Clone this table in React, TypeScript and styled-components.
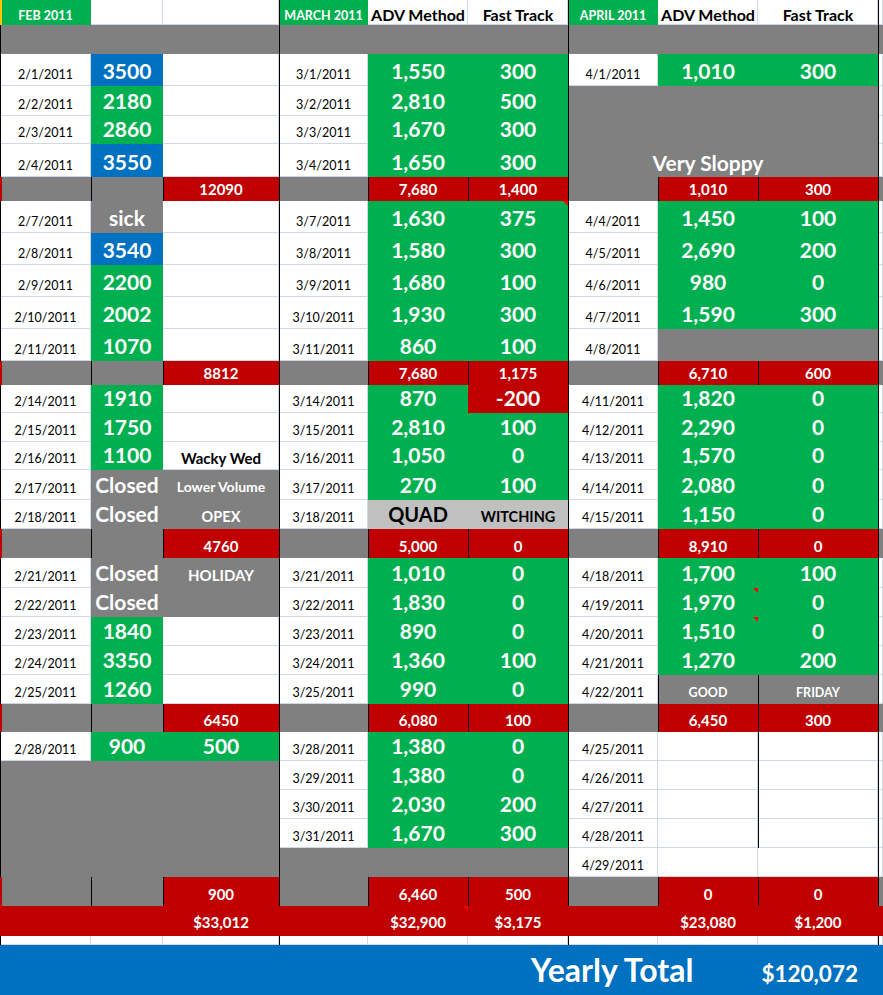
import React from 'react';
import styled, { createGlobalStyle, css } from 'styled-components';

type Fill = 'w' | 'g' | 'b' | 'r' | 'y' | 'l';
type Kind = 'blank' | 'date' | 'fig' | 'sum' | 'month' | 'label' | 'note';

interface Spec {
  k: Kind;
  f: Fill;
  t?: string;
  cs?: number;
  rs?: number;
  e?: boolean;
  flag?: boolean;
  size?: number;
  pad?: number;
  mark?: 'red' | 'gold';
}

const FILL: Record<Fill, string> = {
  w: '#ffffff',
  g: '#00b050',
  b: '#0070c0',
  r: '#c00000',
  y: '#808080',
  l: '#c0c0c0',
};

const GRID = '#d0d7e5';
const COLS = [91, 72, 116, 89, 100, 100, 90, 100, 120, 5];
const ROWS = [
  25, 29, 32, 30, 28, 33, 24, 32, 32, 32, 32, 32, 24, 28, 29, 28, 30, 29, 29, 30, 29, 29, 29, 29, 28,
  29, 29, 29, 29, 29, 29, 30, 9, 50,
];
const EDGE_COLS = new Set([0, 3, 6, 9]);

const Global = createGlobalStyle`
  html, body { margin: 0; padding: 0; background: #ffffff; }
  body { font-family: Lato, "Open Sans", "DejaVu Sans", sans-serif; }
`;

const Sheet = styled.div`
  display: grid;
  width: 883px;
  grid-template-columns: ${COLS.map((c) => `${c}px`).join(' ')};
  grid-template-rows: ${ROWS.map((r) => `${r}px`).join(' ')};
  overflow: hidden;
`;

interface CellProps {
  $fill: Fill;
  $edge?: boolean;
  $mark?: 'red' | 'gold';
  $flag?: boolean;
  $cs?: number;
  $rs?: number;
  $size?: number;
  $pad?: number;
}

const shadowOf = (p: CellProps) => {
  const list: string[] = [];
  if (p.$mark === 'red') list.push('inset 2px 0 0 #c00000');
  if (p.$mark === 'gold') list.push('inset 2px 0 0 #ffc000');
  if (p.$edge) list.push('inset 1px 0 0 #000000');
  if (p.$fill === 'w') list.push(`inset -1px -1px 0 ${GRID}`);
  return list.length ? list.join(', ') : 'none';
};

const Cell = styled.div<CellProps>`
  position: relative;
  box-sizing: border-box;
  display: flex;
  align-items: flex-end;
  justify-content: center;
  min-width: 0;
  white-space: nowrap;
  line-height: 1.2;
  padding-bottom: ${(p) => p.$pad ?? 3}px;
  grid-column: span ${(p) => p.$cs ?? 1};
  grid-row: span ${(p) => p.$rs ?? 1};
  background: ${(p) => FILL[p.$fill]};
  color: ${(p) => (p.$fill === 'w' || p.$fill === 'l' ? '#000000' : '#ffffff')};
  box-shadow: ${shadowOf};
  ${(p) =>
    p.$flag &&
    css`
      &::after {
        content: '';
        position: absolute;
        top: 0;
        right: 0;
        width: 0;
        height: 0;
        border-style: solid;
        border-width: 0 5px 5px 0;
        border-color: transparent #ff0000 transparent transparent;
      }
    `}
`;

const BlankCell = styled(Cell)``;

const DateCell = styled(Cell)`
  font-size: 12.5px;
  font-weight: 400;
  padding-bottom: 4px;
`;

const FigureCell = styled(Cell)`
  font-size: 21px;
  font-weight: 700;
`;

const SumCell = styled(Cell)`
  font-size: 15px;
  font-weight: 700;
`;

const MonthCell = styled(Cell)`
  font-size: 12.5px;
  font-weight: 700;
  padding-bottom: 2px;
`;

const LabelCell = styled(Cell)`
  font-size: 16px;
  font-weight: 700;
  padding-bottom: 1px;
`;

/* free text that may spill over the neighbouring cells, as in a spreadsheet */
const NoteCell = styled(Cell)`
  z-index: 1;
  font-size: ${(p) => p.$size ?? 14}px;
  font-weight: 700;
`;

const Banner = styled.div`
  grid-column: 1 / -1;
  background: #0070c0;
  color: #ffffff;
  display: flex;
  justify-content: flex-end;
  align-items: flex-end;
  padding: 0 25px 6px 0;
  font-weight: 700;
`;

const BannerLine = styled.div`
  font-size: 32px;
  line-height: 1.2;
`;

const BannerAmount = styled.span`
  font-size: 22.5px;
  margin-left: 68px;
`;

const COMP: Record<Kind, typeof Cell> = {
  blank: BlankCell,
  date: DateCell,
  fig: FigureCell,
  sum: SumCell,
  month: MonthCell,
  label: LabelCell,
  note: NoteCell,
};

// helpers
const W = (e = false): Spec => ({ k: 'blank', f: 'w', e });
const Y = (cs = 1, rs = 1): Spec => ({ k: 'blank', f: 'y', cs, rs });
const R = (): Spec => ({ k: 'blank', f: 'r' });
const D = (t: string): Spec => ({ k: 'date', f: 'w', t });
const N = (t: string, f: Fill = 'g', flag = false): Spec => ({ k: 'fig', f, t, flag });
const M = (t: string, mark?: 'gold'): Spec => ({ k: 'month', f: 'g', t, mark });
const L = (t: string): Spec => ({ k: 'label', f: 'w', t });
const Note = (t: string, size: number, f: Fill, pad = 3, extra: Partial<Spec> = {}): Spec => ({
  k: 'note',
  f,
  t,
  size,
  pad,
  ...extra,
});
const S = (t: string): Spec => ({ k: 'sum', f: 'r', t, e: true });
const G = (t: string, flag = false): Spec => ({ k: 'sum', f: 'r', t, pad: 5, flag });

const sub = (c: string, e: string, f: string, h: string, i: string): Spec[] => [
  { k: 'blank', f: 'y', mark: 'red' },
  { k: 'blank', f: 'y', e: true },
  S(c),
  Y(),
  S(e),
  S(f),
  Y(),
  S(h),
  S(i),
  Y(),
];

const TABLE: Spec[][] = [
  [M('FEB 2011', 'gold'), W(), W(), M('MARCH 2011'), L('ADV Method'), L('Fast Track'), M('APRIL 2011'), L('ADV Method'), L('Fast Track'), W()],
  Array.from({ length: 10 }, () => Y()),
  [D('2/1/2011'), N('3500', 'b'), W(), D('3/1/2011'), N('1,550'), N('300'), D('4/1/2011'), N('1,010'), N('300'), W()],
  [D('2/2/2011'), N('2180'), W(), D('3/2/2011'), N('2,810'), N('500'), Y(1, 3), Note('Very Sloppy', 21, 'y', 2, { rs: 3 }), Y(1, 3), W()],
  [D('2/3/2011'), N('2860'), W(), D('3/3/2011'), N('1,670'), N('300'), W()],
  [D('2/4/2011'), N('3550', 'b'), W(), D('3/4/2011'), N('1,650'), N('300'), W()],
  sub('12090', '7,680', '1,400', '1,010', '300'),
  [D('2/7/2011'), N('sick', 'y'), W(), D('3/7/2011'), N('1,630'), N('375', 'g', true), D('4/4/2011'), N('1,450'), N('100'), W()],
  [D('2/8/2011'), N('3540', 'b'), W(), D('3/8/2011'), N('1,580'), N('300'), D('4/5/2011'), N('2,690'), N('200'), W()],
  [D('2/9/2011'), N('2200'), W(), D('3/9/2011'), N('1,680'), N('100'), D('4/6/2011'), N('980'), N('0'), W()],
  [D('2/10/2011'), N('2002'), W(), D('3/10/2011'), N('1,930'), N('300'), D('4/7/2011'), N('1,590'), N('300'), W()],
  [D('2/11/2011'), N('1070'), W(), D('3/11/2011'), N('860'), N('100'), D('4/8/2011'), Y(), Y(), W()],
  sub('8812', '7,680', '1,175', '6,710', '600'),
  [D('2/14/2011'), N('1910'), W(), D('3/14/2011'), N('870'), N('-200', 'r'), D('4/11/2011'), N('1,820'), N('0'), W()],
  [D('2/15/2011'), N('1750'), W(), D('3/15/2011'), N('2,810'), N('100'), D('4/12/2011'), N('2,290'), N('0'), W()],
  [D('2/16/2011'), N('1100'), Note('Wacky Wed', 15, 'w', 3), D('3/16/2011'), N('1,050'), N('0'), D('4/13/2011'), N('1,570'), N('0'), W()],
  [D('2/17/2011'), N('Closed', 'y'), Note('Lower Volume', 14, 'y', 4), D('3/17/2011'), N('270'), N('100'), D('4/14/2011'), N('2,080'), N('0'), W()],
  [D('2/18/2011'), N('Closed', 'y'), Note('OPEX', 14.5, 'y', 4), D('3/18/2011'), Note('QUAD', 20, 'l', 3), Note('WITCHING', 14.5, 'l', 4), D('4/15/2011'), N('1,150'), N('0'), W()],
  sub('4760', '5,000', '0', '8,910', '0'),
  [D('2/21/2011'), N('Closed', 'y'), Note('HOLIDAY', 15, 'y', 4), D('3/21/2011'), N('1,010'), N('0'), D('4/18/2011'), N('1,700'), N('100'), W()],
  [D('2/22/2011'), N('Closed', 'y'), Y(), D('3/22/2011'), N('1,830'), N('0'), D('4/19/2011'), N('1,970', 'g', true), N('0'), W()],
  [D('2/23/2011'), N('1840'), W(), D('3/23/2011'), N('890'), N('0'), D('4/20/2011'), N('1,510', 'g', true), N('0'), W()],
  [D('2/24/2011'), N('3350'), W(), D('3/24/2011'), N('1,360'), N('100'), D('4/21/2011'), N('1,270'), N('200'), W()],
  [D('2/25/2011'), N('1260'), W(), D('3/25/2011'), N('990'), N('0'), D('4/22/2011'), Note('GOOD', 12.5, 'y', 4, { e: true }), Note('FRIDAY', 12.5, 'y', 4, { e: true }), W()],
  sub('6450', '6,080', '100', '6,450', '300'),
  [D('2/28/2011'), N('900'), N('500'), D('3/28/2011'), N('1,380'), N('0'), D('4/25/2011'), W(), W(true), W()],
  [Y(3, 4), D('3/29/2011'), N('1,380'), N('0'), D('4/26/2011'), W(), W(true), W()],
  [D('3/30/2011'), N('2,030'), N('200'), D('4/27/2011'), W(), W(true), W()],
  [D('3/31/2011'), N('1,670'), N('300'), D('4/28/2011'), W(), W(true), W()],
  [Y(), Y(), Y(), D('4/29/2011'), W(), W(), W()],
  sub('900', '6,460', '500', '0', '0'),
  [R(), R(), G('$33,012'), R(), G('$32,900', true), G('$3,175'), R(), G('$23,080'), G('$1,200'), R()],
  Array.from({ length: 10 }, () => W()),
];

const GRAND_ROW = 31;

function buildCells() {
  const taken = new Set<string>();
  const out: React.ReactNode[] = [];
  TABLE.forEach((row, r) => {
    let c = 0;
    row.forEach((spec, idx) => {
      while (taken.has(`${r},${c}`)) c++;
      const cs = spec.cs ?? 1;
      const rs = spec.rs ?? 1;
      for (let i = 0; i < rs; i++) for (let j = 0; j < cs; j++) taken.add(`${r + i},${c + j}`);
      const edge = !!spec.e || (EDGE_COLS.has(c) && r !== GRAND_ROW && !spec.mark);
      const Comp = COMP[spec.k];
      out.push(
        <Comp
          key={`${r}-${idx}`}
          $fill={spec.f}
          $edge={edge}
          $mark={spec.mark}
          $flag={spec.flag}
          $cs={cs}
          $rs={rs}
          $size={spec.size}
          $pad={spec.pad}
        >
          {spec.t}
        </Comp>
      );
      c += cs;
    });
  });
  return out;
}

export default function App() {
  return (
    <>
      <Global />
      <Sheet>
        {buildCells()}
        <Banner>
          <BannerLine>
            <span>Yearly Total</span>
            <BannerAmount>$120,072</BannerAmount>
          </BannerLine>
        </Banner>
      </Sheet>
    </>
  );
}
